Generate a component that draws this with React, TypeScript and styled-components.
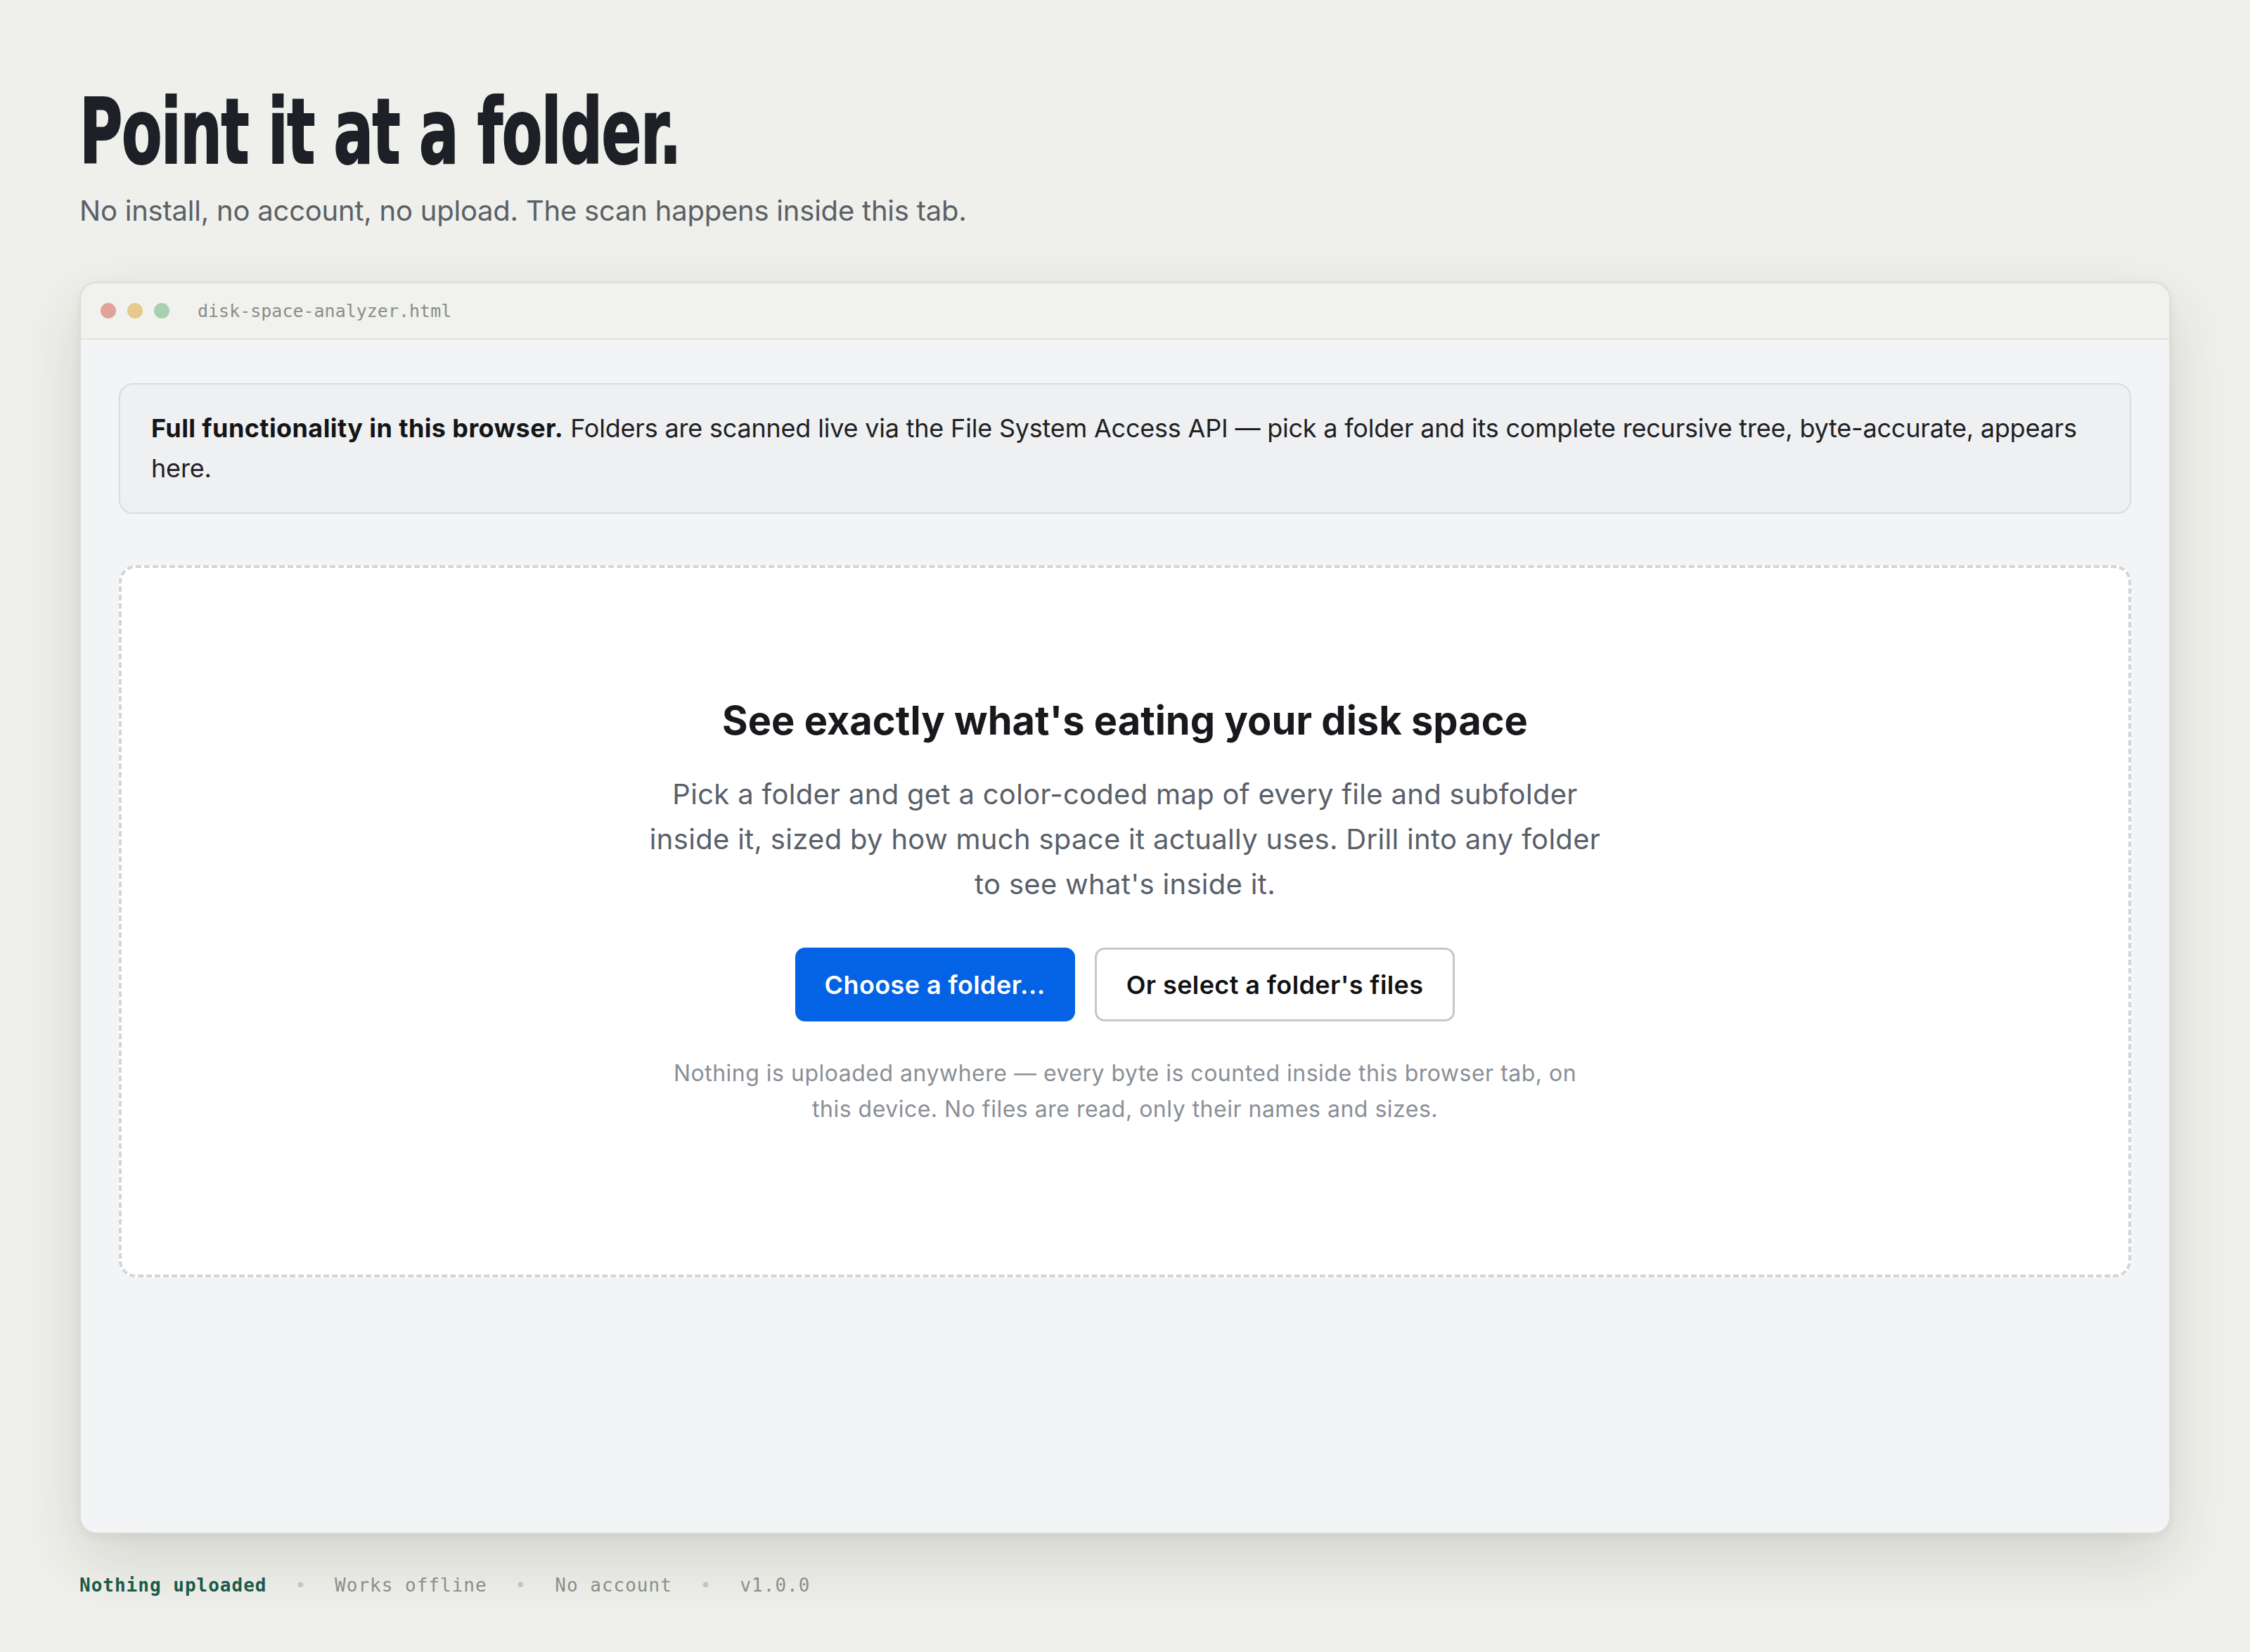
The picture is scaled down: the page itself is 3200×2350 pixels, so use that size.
import React from 'react';
import styled, { createGlobalStyle } from 'styled-components';

const GlobalStyle = createGlobalStyle`
  * {
    box-sizing: border-box;
  }

  body {
    margin: 0;
    background: #eff0eb;
    font-family: Inter, 'Noto Sans', 'Liberation Sans', sans-serif;
    color: #1d2025;
  }
`;

const Page = styled.div`
  padding: 123px 113px 80px;
`;

const Title = styled.h1`
  margin: 0;
  font-family: 'DejaVu Sans Condensed', 'DejaVu Sans', sans-serif;
  font-weight: 700;
  font-size: 129px;
  line-height: 1;
  letter-spacing: -2px;
  color: #1d2026;
  -webkit-text-stroke: 2px #1d2026;
  transform: scaleX(0.722);
  transform-origin: left center;
  white-space: nowrap;
`;

const Lede = styled.p`
  margin: 18px 0 0;
  font-size: 40px;
  line-height: 60px;
  letter-spacing: -0.22px;
  color: #5a6067;
`;

const Window = styled.section`
  margin-top: 71px;
  border: 2px solid #dcddd7;
  border-radius: 24px;
  overflow: hidden;
  background: #f3f4f6;
  box-shadow: 0 36px 90px rgba(35, 40, 30, 0.14), 0 4px 14px rgba(35, 40, 30, 0.06);
`;

const TitleBar = styled.div`
  display: flex;
  align-items: center;
  height: 80px;
  padding-left: 28px;
  background: #f1f2ed;
  border-bottom: 2px solid #e1e2dc;
`;

const Lights = styled.div`
  display: flex;
  gap: 16px;
  margin-right: 40px;
`;

const Light = styled.span<{ $color: string }>`
  width: 22px;
  height: 22px;
  border-radius: 50%;
  background: ${(p) => p.$color};
`;

const FileName = styled.span`
  font-family: 'DejaVu Sans Mono', 'Liberation Mono', monospace;
  font-size: 25px;
  color: #8a8d88;
`;

const Body = styled.div`
  padding: 62px 54px 363px;
`;

const Notice = styled.div`
  padding: 34px 44px;
  border: 2px solid #d9dbde;
  border-radius: 20px;
  background: #eff0f2;
  font-size: 36px;
  line-height: 57px;
  letter-spacing: -0.2px;
  color: #1f2124;

  strong {
    font-weight: 700;
    letter-spacing: 0.4px;
    color: #141517;
  }
`;

const DropZone = styled.div`
  display: flex;
  flex-direction: column;
  align-items: center;
  justify-content: center;
  height: 1013px;
  margin-top: 73px;
  padding-bottom: 25px;
  border: 4px dashed #d3d5d9;
  border-radius: 24px;
  background: #ffffff;
  text-align: center;
`;

const DropTitle = styled.h2`
  margin: 0;
  font-size: 56px;
  line-height: 65px;
  font-weight: 700;
  letter-spacing: 0;
  color: #18191c;
`;

const DropText = styled.p`
  max-width: 1380px;
  margin: 40px 0 0;
  font-size: 40px;
  line-height: 64px;
  letter-spacing: 0.3px;
  color: #59606a;
`;

const Actions = styled.div`
  display: flex;
  gap: 28px;
  margin-top: 58px;
`;

const Button = styled.button<{ $primary?: boolean }>`
  height: 105px;
  padding: 0 42px;
  border-radius: 14px;
  font-family: inherit;
  font-size: 36px;
  font-weight: 600;
  letter-spacing: 0.4px;
  cursor: pointer;
  border: ${(p) => (p.$primary ? 'none' : '3px solid #c4c7cc')};
  background: ${(p) => (p.$primary ? '#0363e4' : '#ffffff')};
  color: ${(p) => (p.$primary ? '#ffffff' : '#111214')};
`;

const FinePrint = styled.p`
  max-width: 1320px;
  margin: 48px 0 0;
  font-size: 32px;
  line-height: 51px;
  letter-spacing: 0.5px;
  color: #8a8f96;
`;

const Footer = styled.footer`
  display: flex;
  align-items: center;
  gap: 40px;
  margin-top: 54px;
  font-family: 'DejaVu Sans Mono', 'Liberation Mono', monospace;
  font-size: 26px;
  line-height: 39px;
  letter-spacing: 1px;
  color: #8b8e89;
`;

const FooterItem = styled.span<{ $accent?: boolean }>`
  color: ${(p) => (p.$accent ? '#1b5a48' : '#8b8e89')};
  font-weight: ${(p) => (p.$accent ? 700 : 400)};
`;

const Sep = styled.span`
  color: #c3c5c0;
`;

const footerItems = ['Works offline', 'No account', 'v1.0.0'];

export default function App() {
  return (
    <>
      <GlobalStyle />
      <Page>
        <Title>Point it at a folder.</Title>
        <Lede>No install, no account, no upload. The scan happens inside this tab.</Lede>

        <Window>
          <TitleBar>
            <Lights>
              <Light $color="#e3a19b" />
              <Light $color="#e6c98b" />
              <Light $color="#a9cfb1" />
            </Lights>
            <FileName>disk-space-analyzer.html</FileName>
          </TitleBar>

          <Body>
            <Notice>
              <strong>Full functionality in this browser.</strong> Folders are scanned live via the
              File System Access API — pick a folder and its complete recursive tree, byte-accurate,
              appears here.
            </Notice>

            <DropZone>
              <DropTitle>See exactly what's eating your disk space</DropTitle>
              <DropText>
                Pick a folder and get a color-coded map of every file and subfolder inside it, sized
                by how much space it actually uses. Drill into any folder to see what's inside it.
              </DropText>
              <Actions>
                <Button $primary>Choose a folder...</Button>
                <Button>Or select a folder's files</Button>
              </Actions>
              <FinePrint>
                Nothing is uploaded anywhere — every byte is counted inside this browser tab, on this
                device. No files are read, only their names and sizes.
              </FinePrint>
            </DropZone>
          </Body>
        </Window>

        <Footer>
          <FooterItem $accent>Nothing uploaded</FooterItem>
          {footerItems.map((item) => (
            <React.Fragment key={item}>
              <Sep>•</Sep>
              <FooterItem>{item}</FooterItem>
            </React.Fragment>
          ))}
        </Footer>
      </Page>
    </>
  );
}
